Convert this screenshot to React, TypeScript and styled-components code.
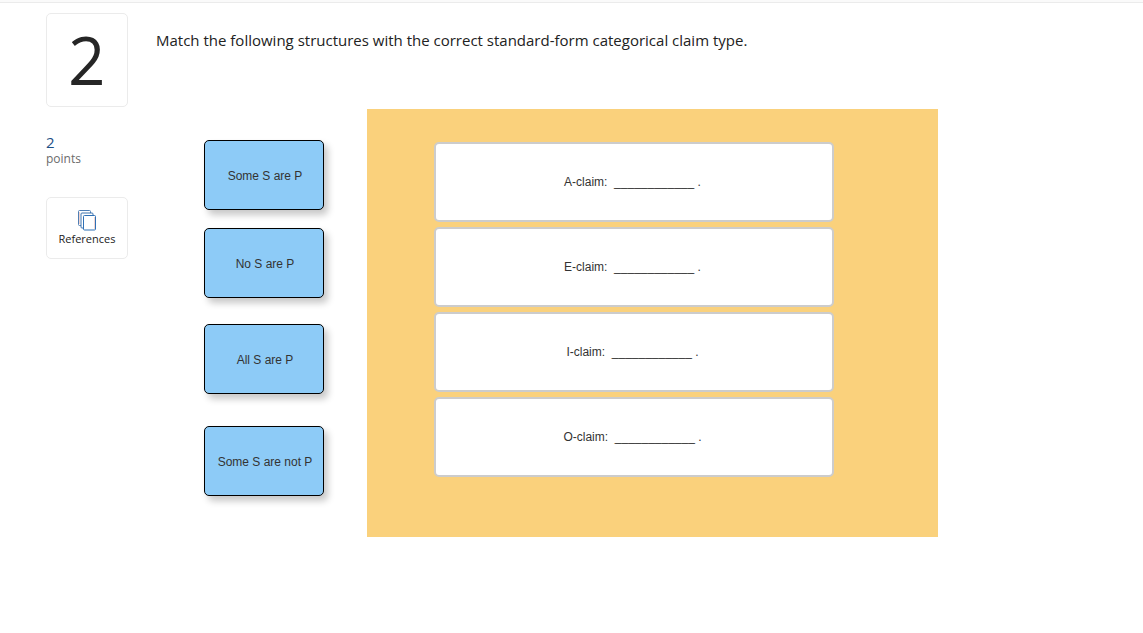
import React from "react";
import styled, { createGlobalStyle } from "styled-components";

const GlobalStyle = createGlobalStyle`
  * { box-sizing: border-box; }
  body {
    margin: 0;
    background: #fff;
    color: #222;
    font-family: "Open Sans", "Noto Sans", sans-serif;
  }
`;

const TopBar = styled.div`
  height: 3px;
  background: #fafafa;
  border-bottom: 1px solid #ebebeb;
`;

const Page = styled.main`
  display: flex;
  align-items: flex-start;
  gap: 28px;
  padding: 10px 46px 40px;
`;

const Sidebar = styled.aside`
  flex: 0 0 82px;
  display: flex;
  flex-direction: column;
`;

const QuestionNumber = styled.h1`
  margin: 0;
  height: 94px;
  display: flex;
  align-items: center;
  justify-content: center;
  border: 1px solid #ebebeb;
  border-radius: 5px;
  color: #262626;
  font-size: 64px;
  line-height: 88px;
  font-weight: 300;
  -webkit-text-stroke: 2px #262626;
  stroke-linejoin: round;
`;

const Points = styled.div`
  margin-top: 26px;
  display: flex;
  flex-direction: column;
`;

const PointsValue = styled.span`
  color: #1d4f86;
  font-size: 15px;
  line-height: 18px;
`;

const PointsLabel = styled.span`
  color: #6b6b6b;
  font-size: 12px;
  line-height: 16px;
`;

const ReferencesButton = styled.button`
  margin-top: 30px;
  height: 62px;
  padding: 0;
  display: flex;
  flex-direction: column;
  align-items: center;
  justify-content: center;
  border: 1px solid #ebebeb;
  border-radius: 5px;
  background: #fff;
  color: #222;
  font-family: inherit;
  font-size: 11px;
  line-height: 16px;
  cursor: pointer;
`;

const Content = styled.section`
  flex: 1;
  min-width: 0;
`;

const Prompt = styled.p`
  margin: 17px 0 0;
  font-size: 15px;
  line-height: 20px;
`;

const Activity = styled.div`
  display: flex;
  align-items: flex-start;
  gap: 43px;
  margin-top: 59px;
  padding-left: 48px;
  max-width: 782px;
`;

const TileColumn = styled.div`
  flex: 0 0 120px;
  display: flex;
  flex-direction: column;
  padding-top: 31px;
`;

const Tile = styled.button<{ $spaceAfter: number }>`
  height: 70px;
  margin: 0 0 ${(p) => p.$spaceAfter}px;
  padding: 2px 0 0 2px;
  border: 1px solid #000;
  border-radius: 5px;
  background: #8dcbf7;
  box-shadow: 4px 5px 7px rgba(0, 0, 0, 0.22);
  color: #333;
  font-family: "Liberation Sans", sans-serif;
  font-size: 12px;
  line-height: 16px;
  cursor: grab;
`;

const Board = styled.div`
  flex: 1;
  min-width: 0;
  display: flex;
  flex-direction: column;
  gap: 5px;
  padding: 33px 104px 60px 67px;
  background: #fad17c;
`;

const DropZone = styled.div`
  height: 80px;
  padding-right: 3px;
  display: flex;
  align-items: center;
  justify-content: center;
  border: 2px solid #ccc;
  border-radius: 5px;
  background: #fff;
  color: #333;
  font-family: "Liberation Sans", sans-serif;
  font-size: 12px;
  line-height: 16px;
  white-space: pre;
`;

const tiles = [
  { text: "Some S are P", spaceAfter: 18 },
  { text: "No S are P", spaceAfter: 26 },
  { text: "All S are P", spaceAfter: 32 },
  { text: "Some S are not P", spaceAfter: 0 },
];

const claims = ["A", "E", "I", "O"];

function PagesIcon() {
  return (
    <svg width="18" height="21" viewBox="0 0 18 21" fill="none" aria-hidden="true">
      <path d="M3 15.500H1.500a1 1 0 0 1-1-1V1.500a1 1 0 0 1 1-1H11.500a1 1 0 0 1 1 1V3" stroke="#4f7fb5" />
      <path d="M5.500 18H4a1 1 0 0 1-1-1V4a1 1 0 0 1 1-1h10a1 1 0 0 1 1 1v1.500" stroke="#3f74ae" />
      <rect x="5.500" y="5.500" width="12" height="14.500" rx="1" fill="#fff" stroke="#2f70b5" />
      <path d="M1.500 2v12M16.500 7v12" stroke="#f0d5d2" />
    </svg>
  );
}

export default function App() {
  return (
    <>
      <GlobalStyle />
      <TopBar />
      <Page>
        <Sidebar>
          <QuestionNumber>2</QuestionNumber>
          <Points>
            <PointsValue>2</PointsValue>
            <PointsLabel>points</PointsLabel>
          </Points>
          <ReferencesButton type="button">
            <PagesIcon />
            References
          </ReferencesButton>
        </Sidebar>
        <Content>
          <Prompt>
            Match the following structures with the correct standard-form categorical claim type.
          </Prompt>
          <Activity>
            <TileColumn>
              {tiles.map((tile) => (
                <Tile key={tile.text} type="button" $spaceAfter={tile.spaceAfter}>
                  {tile.text}
                </Tile>
              ))}
            </TileColumn>
            <Board>
              {claims.map((claim) => (
                <DropZone key={claim}>{`${claim}-claim:  ____________ .`}</DropZone>
              ))}
            </Board>
          </Activity>
        </Content>
      </Page>
    </>
  );
}
